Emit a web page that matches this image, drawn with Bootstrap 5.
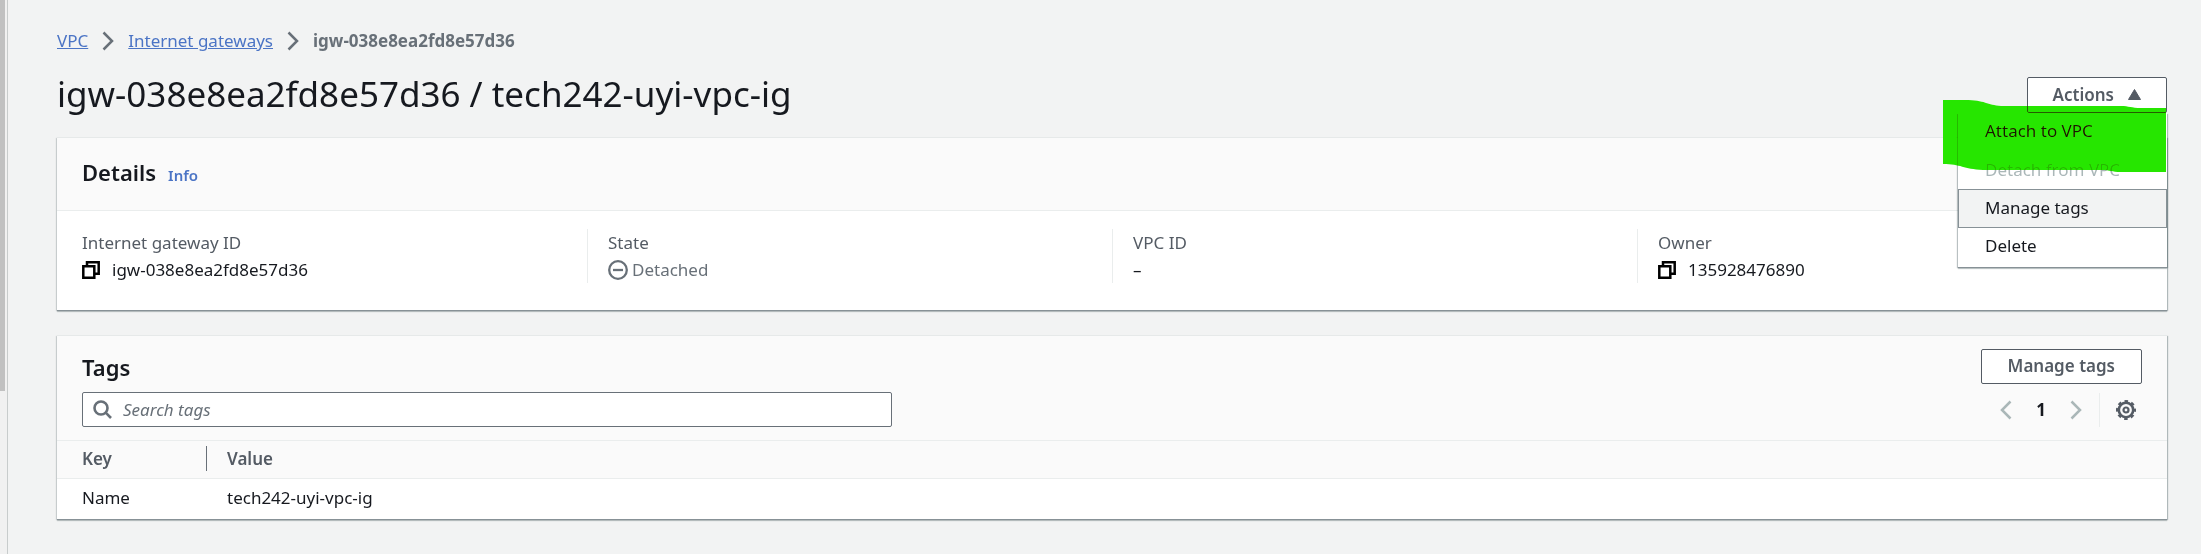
<!DOCTYPE html>
<html lang="en">
<head>
<meta charset="utf-8">
<meta name="viewport" content="width=device-width, initial-scale=1">
<title>igw-038e8ea2fd8e57d36 | VPC</title>
<link href="https://cdn.jsdelivr.net/npm/bootstrap@5.3.0/dist/css/bootstrap.min.css" rel="stylesheet">
<style>
  body { font-family: "Noto Sans", "Open Sans", sans-serif; font-size: 17px; line-height: 27px; color: #16191f; background: #f2f3f3; }
  a { color: #4b74c5; }
  .rail { width: 8px; background: #f1f1f1; border-right: 1px solid #c8cccc; flex: none; }
  .rail-thumb { width: 5px; height: 391px; background: #c1c1c1; }
  .page { padding: 27px 34px 34px 49px; min-width: 0; }
  .crumbs { gap: 14px; color: #687078; margin-bottom: 14px; }
  .title-row { margin-bottom: 16px; }
  .title-row h1 { font-size: 35px; line-height: 51px; padding-bottom: 2px; font-weight: 400; margin: 0; }
  .panel { background: #fff; border-top: 1px solid #e6e9e9; box-shadow: 0 1px 0 #879196, 0 2px 1px rgba(0,28,36,.2), 1px 1px 1px rgba(0,28,36,.25), -1px 1px 1px rgba(0,28,36,.15); margin-bottom: 25px; }
  .panel-head { background: #fafafa; border-bottom: 1px solid #eaeded; padding: 0 25px; }
  .panel h2 { font-size: 22px; line-height: 32px; font-weight: 600; margin: 0; }
  .details-head { padding-top: 18px; padding-bottom: 21px; gap: 12px; }
  .info { font-size: 15px; font-weight: 600; text-decoration: none; }
  .facts-wrap { margin: 0; padding: 18px 25px 27px; }
  .facts { --bs-gutter-x: 40px; }
  .facts > div + div { border-left: 1px solid #eaeded; }
  .facts dt { font-weight: 400; color: #545b64; }
  .facts dd { margin: 0; }
  .muted { color: #687078; }
  .tool { background: #fff; border: 1px solid #545b64; border-radius: 2px; color: #545b64; font-weight: 600; line-height: 27px; }
  .plain { background: none; border: 0; padding: 0; display: flex; }
  .actions { padding: 3px 25px 4px; gap: 14px; }
  .manage { padding: 2px 26px 4px; }
  .actions-menu { position: absolute; top: 100%; right: 0; width: 209px; z-index: 2; background: #fff; padding: 0 0 1px; margin: 0; box-shadow: 0 1px 0 #879196, 0 2px 1px rgba(0,28,36,.2), 1px 1px 1px rgba(0,28,36,.25), -1px 1px 1px rgba(0,28,36,.25); }
  .actions-menu button { display: block; width: 100%; height: 38px; padding: 0 26px 2px; border: 1px solid transparent; background: none; text-align: left; color: #16191f; line-height: 27px; }
  .actions-menu button:disabled { color: #aab7b8; padding-bottom: 0; }
  .actions-menu .current { height: 39px; background: #f2f3f3; border-color: #879196; }
  .marker { position: absolute; top: 23px; right: 1px; z-index: 3; mix-blend-mode: darken; pointer-events: none; }
  .tags-head { padding-top: 13px; padding-bottom: 13px; }
  .tools-row { margin-top: 8px; }
  .search { width: 810px; max-width: 60%; height: 35px; background: #fff; border: 1px solid #687078; border-radius: 2px; padding: 0 10px; gap: 11px; }
  .search input { border: 0; outline: 0; padding: 0; flex: 1; min-width: 0; background: none; }
  .search input::placeholder { font-style: italic; color: #687078; opacity: 1; }
  .pager { gap: 24px; }
  .pager .plain:disabled { color: #aab7b8; }
  .split { border-left: 1px solid #eaeded; height: 34px; padding-left: 16px; margin-left: -7px; padding-right: 6px; }
  .tags { width: 100%; table-layout: fixed; }
  .tags th { background: #fafafa; color: #545b64; font-weight: 600; height: 37px; border-bottom: 1px solid #eaeded; }
  .tags td { height: 41px; }
  .tags th, .tags td { padding: 0 20px 2px; }
  .tags tr > :first-child { width: 150px; padding: 0 0 2px 25px; }
  .key-cell { border-right: 1px solid #687078; height: 25px; line-height: 25px; }
</style>
</head>
<body>
<svg class="d-none">
  <symbol id="next" viewBox="0 0 12 20"><path d="M1.5 1.5 10 10 1.5 18.5" fill="none" stroke="currentColor" stroke-width="2.5"/></symbol>
  <symbol id="copy" viewBox="0 0 18 18"><path d="M1.300 5.300h11v11.400h-11zM5 4.800V1.300h11.700v11.400h-4" fill="none" stroke="currentColor" stroke-width="2.500"/></symbol>
</svg>
<div class="d-flex min-vh-100">
  <div class="rail"><div class="rail-thumb"></div></div>
  <main class="page flex-grow-1">
    <nav class="crumbs d-flex align-items-center" aria-label="Breadcrumb">
      <a href="#">VPC</a>
      <svg width="12" height="20"><use href="#next"/></svg>
      <a href="#">Internet gateways</a>
      <svg width="12" height="20"><use href="#next"/></svg>
      <strong class="fw-bold">igw-038e8ea2fd8e57d36</strong>
    </nav>
    <header class="title-row d-flex justify-content-between align-items-center">
      <h1>igw-038e8ea2fd8e57d36 / tech242-uyi-vpc-ig</h1>
      <div class="position-relative">
        <button type="button" class="tool actions d-flex align-items-center" aria-expanded="true">Actions
          <svg width="13" height="11"><path d="M6.500.5 12.500 10.500H.5z" fill="#545b64" stroke="#545b64" stroke-linejoin="round"/></svg>
        </button>
        <ul class="actions-menu list-unstyled">
          <li><button type="button">Attach to VPC</button></li>
          <li><button type="button" disabled>Detach from VPC</button></li>
          <li><button type="button" class="current">Manage tags</button></li>
          <li><button type="button">Delete</button></li>
        </ul>
        <svg class="marker" width="223" height="72"><path d="M0 0H22C42 0 44 5 58 6H178C186 6 188 8 198 8H223V72H178C168 72 168 70 158 70H40C20 69 18 64 0 64z" fill="#26e600"/></svg>
      </div>
    </header>

    <section class="panel">
      <div class="panel-head details-head d-flex align-items-baseline">
        <h2>Details</h2>
        <a class="info" href="#">Info</a>
      </div>
      <dl class="facts-wrap">
        <div class="row facts">
          <div class="col-3"><dt>Internet gateway ID</dt><dd class="d-flex align-items-center gap-2"><button type="button" class="plain me-1" aria-label="Copy"><svg width="18" height="18"><use href="#copy"/></svg></button>igw-038e8ea2fd8e57d36</dd></div>
          <div class="col-3"><dt>State</dt><dd class="d-flex align-items-center gap-1 muted"><svg width="20" height="20" fill="none" stroke="currentColor" stroke-width="2.300"><circle cx="10" cy="10" r="8.800"/><path d="M5 10h10"/></svg>Detached</dd></div>
          <div class="col-3"><dt>VPC ID</dt><dd>–</dd></div>
          <div class="col-3"><dt>Owner</dt><dd class="d-flex align-items-center gap-2"><button type="button" class="plain me-1" aria-label="Copy"><svg width="18" height="18"><use href="#copy"/></svg></button>135928476890</dd></div>
        </div>
      </dl>
    </section>

    <section class="panel">
      <div class="panel-head tags-head">
        <div class="d-flex justify-content-between align-items-center">
          <h2>Tags</h2>
          <button type="button" class="tool manage">Manage tags</button>
        </div>
        <div class="tools-row d-flex justify-content-between align-items-center">
          <label class="search d-flex align-items-center">
            <svg width="19" height="19" fill="none" stroke="#687078" stroke-width="2.600"><circle cx="8" cy="8" r="6.500"/><path d="M12.700 12.700 18 18"/></svg>
            <input type="search" placeholder="Search tags" aria-label="Search tags">
          </label>
          <div class="pager d-flex align-items-center">
            <button type="button" class="plain" aria-label="Previous page" disabled><svg width="12" height="20"><path d="M10.500 1.500 2 10l8.500 8.500" fill="none" stroke="currentColor" stroke-width="2.500"/></svg></button>
            <b>1</b>
            <button type="button" class="plain" aria-label="Next page" disabled><svg width="12" height="20"><use href="#next"/></svg></button>
            <div class="split d-flex align-items-center">
              <button type="button" class="plain" aria-label="Preferences"><svg width="20" height="20" fill="none" stroke="#545b64"><circle cx="10" cy="10" r="7.200" stroke-width="2.600"/><circle cx="10" cy="10" r="9" stroke-width="2" stroke-dasharray="3.600 3.469" stroke-dashoffset="1.800"/><circle cx="10" cy="10" r="2.500" stroke-width="2.200"/></svg></button>
            </div>
          </div>
        </div>
      </div>
      <table class="tags">
        <thead><tr><th scope="col"><div class="key-cell">Key</div></th><th scope="col">Value</th></tr></thead>
        <tbody><tr><td>Name</td><td>tech242-uyi-vpc-ig</td></tr></tbody>
      </table>
    </section>
  </main>
</div>
<script src="https://cdn.jsdelivr.net/npm/bootstrap@5.3.0/dist/js/bootstrap.bundle.min.js"></script>
</body>
</html>
